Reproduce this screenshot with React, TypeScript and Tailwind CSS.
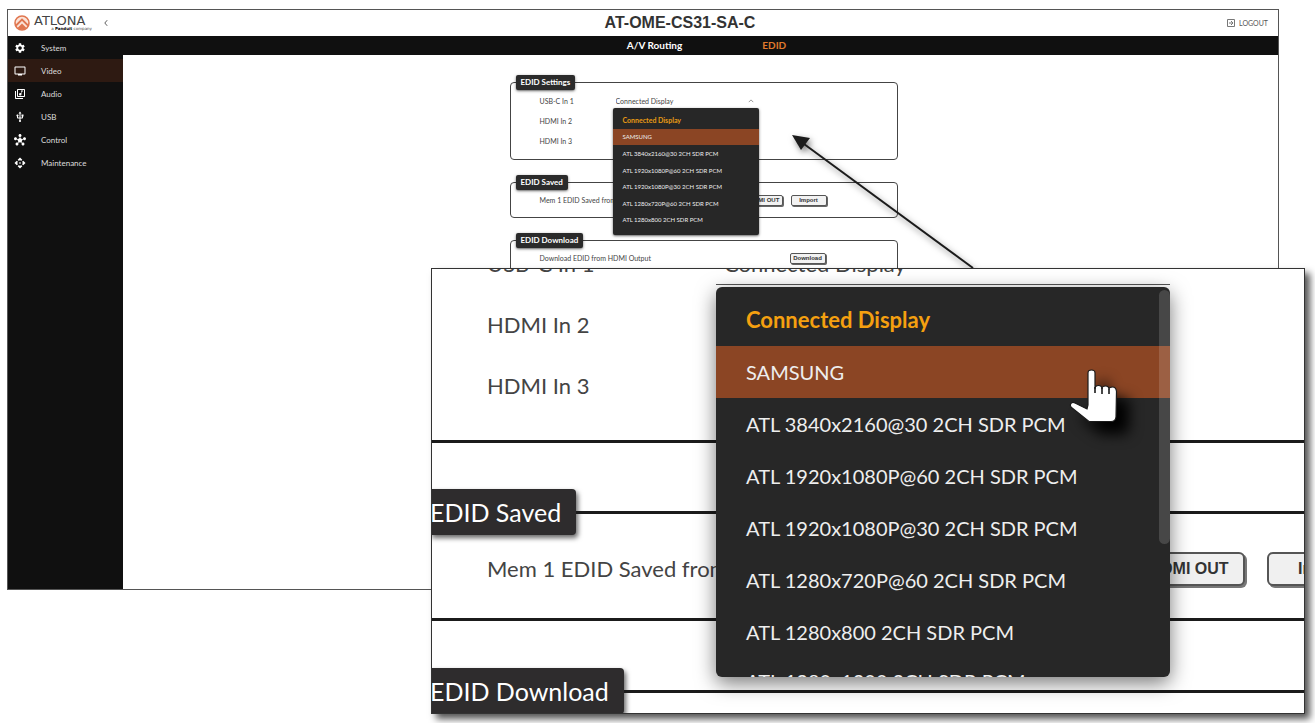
import React from 'react';
import { MdSettings, MdOutlineLibraryMusic, MdHub, MdUsb, MdOutlineTv, MdApi } from 'react-icons/md';

const edidOptions = [
  'Connected Display',
  'SAMSUNG',
  'ATL 3840x2160@30 2CH SDR PCM',
  'ATL 1920x1080P@60 2CH SDR PCM',
  'ATL 1920x1080P@30 2CH SDR PCM',
  'ATL 1280x720P@60 2CH SDR PCM',
  'ATL 1280x800 2CH SDR PCM',
];

const navItems = [
  { label: 'System', icon: MdSettings },
  { label: 'Video', icon: MdOutlineTv, active: true },
  { label: 'Audio', icon: MdOutlineLibraryMusic },
  { label: 'USB', icon: MdUsb },
  { label: 'Control', icon: MdHub },
  { label: 'Maintenance', icon: MdApi },
];

const Logo: React.FC = () => (
  <a href="#" className="flex items-center gap-1">
    <svg viewBox="0 0 16 16" className="w-4 h-4" fill="none" aria-hidden="true">
      <circle cx="8" cy="8" r="7" fill="#fbe3d8" stroke="#e0764f" strokeWidth="1.6" />
      <path d="M2 10.500 8 4.500l6 6" stroke="#e0764f" strokeWidth="1.800" />
      <path d="M8 8.500l4.500 4.500Q8 16.500 3.500 13z" fill="#e0764f" />
    </svg>
    <span className="flex w-[58px] flex-col font-['DejaVu_Sans',sans-serif] text-[#444]">
      <span className="text-[13px] leading-[11px]">ATLONA</span>
      <span className="text-right text-[4px] leading-[5px] whitespace-nowrap">
        a <b className="text-black">Panduit</b> company
      </span>
    </span>
  </a>
);

const Cursor: React.FC = () => (
  <svg
    viewBox="0 0 50 56"
    aria-hidden="true"
    className="absolute left-[353px] top-[82px] w-[50px] h-[56px] drop-shadow-[12px_12px_7px_#000]"
  >
    <path
      d="M19 38V6q0-3 3.500-3T26 6v16q0-3.500 3.500-3.500T33 22q0-3 3.500-3t3.500 3.500q0-2.500 3.500-2.500t4 4.500L47 50q-.500 4.500-5 4.500H20L2.500 40.500q-2-2-.500-4t4-.500L18 42z"
      fill="#fff"
      stroke="#1b1b1b"
      strokeWidth="1.200"
    />
    <path d="M26 20v6M33 21v6M40 22v5" stroke="#1b1b1b" strokeWidth="1.600" />
  </svg>
);

const Legend: React.FC<{ children: React.ReactNode }> = ({ children }) => (
  <legend className="ml-1 h-[15px] px-[5px] rounded-xs bg-[#2b2b2b] text-white text-[8px] leading-[14px] font-bold shadow-sm shadow-black/50">
    {children}
  </legend>
);

const SmallButton: React.FC<{ children: React.ReactNode }> = ({ children }) => (
  <button
    type="button"
    className="w-9 h-[11px] rounded-xs border border-[#555] bg-[#f2f2f2] font-['Liberation_Sans',sans-serif] text-[6px] leading-[9px] font-bold text-[#333] shadow-[1px_1px_0_#666]"
  >
    {children}
  </button>
);

const EdidPage: React.FC = () => (
  <form className="w-[388px] mx-auto pt-5 text-[7px] text-[#444]">
    <fieldset className="h-[85px] px-[1px] rounded-sm border border-[#444]">
      <Legend>EDID Settings</Legend>
      <div className="relative pt-px pl-7">
        <div className="flex h-5 items-center">
          <label htmlFor="usbc" className="w-[76px]">USB-C In 1</label>
          <select id="usbc" className="w-[140px] appearance-none bg-transparent outline-none">
            <option>Connected Display</option>
          </select>
          <svg viewBox="0 0 8 5" className="-ml-2 w-1.5 h-1" fill="none" stroke="#777"><path d="M1 4l3-3 3 3" /></svg>
        </div>
        <p className="h-5 leading-5">HDMI In 2</p>
        <p className="h-5 leading-5">HDMI In 3</p>
        <ul
          role="listbox"
          aria-label="USB-C In 1 EDID"
          className="absolute left-[101px] top-[18px] z-10 flex w-[146px] h-[127px] flex-col rounded-xs bg-[#272727] pt-1 pb-[7px] text-[6px] text-[#eee] shadow-sm shadow-black/50"
        >
          {edidOptions.map((option, i) => (
            <li
              key={option}
              role="option"
              aria-selected={i === 0}
              className={`flex flex-1 items-center px-2.5 whitespace-nowrap ${i === 0 ? 'text-[7px] font-bold text-[#e89b14]' : ''} ${i === 1 ? 'bg-[#8b4524]' : ''}`}
            >
              {option}
            </li>
          ))}
        </ul>
      </div>
    </fieldset>
    <fieldset className="mt-[15px] h-[43px] px-[1px] rounded-sm border border-[#444]">
      <Legend>EDID Saved</Legend>
      <div className="flex h-5 items-center pl-7 pr-[69px]">
        <span className="flex-1">Mem 1 EDID Saved from</span>
        <div className="flex gap-2">
          <SmallButton>HDMI OUT</SmallButton>
          <SmallButton>Import</SmallButton>
        </div>
      </div>
    </fieldset>
    <fieldset className="mt-[15px] h-[43px] px-[1px] rounded-sm border border-[#444]">
      <Legend>EDID Download</Legend>
      <div className="flex h-5 items-center justify-between pl-7 pr-[70px]">
        <span>Download EDID from HDMI Output</span>
        <SmallButton>Download</SmallButton>
      </div>
    </fieldset>
  </form>
);

const DeviceWindow: React.FC = () => (
  <div className="mr-9 border border-[#555] bg-white">
    <header className="grid grid-cols-3 h-[26px] items-center pl-1.5 pr-2.5">
      <div className="flex items-center gap-3">
        <Logo />
        <button aria-label="Collapse menu">
          <svg viewBox="0 0 5 8" className="w-1 h-2" fill="none" stroke="#333"><path d="M4 .5 1 4l3 3.500" /></svg>
        </button>
      </div>
      <h1 className="text-center pl-[78px] whitespace-nowrap font-['Liberation_Sans',sans-serif] text-base leading-4 font-bold text-[#333]">
        AT-OME-CS31-SA-C
      </h1>
      <a href="#" className="flex items-center justify-end gap-1 text-[7px] text-[#555]">
        <svg viewBox="0 0 8 8" className="w-2 h-2" fill="none" stroke="#777"><path d="M.5.5h7v7h-7zM2 4h4M4 2l2 2-2 2" /></svg>
        LOGOUT
      </a>
    </header>
    <div className="flex bg-[#101010]">
      <nav className="w-[115px] text-[8px] text-[#ddd]">
        {navItems.map(({ label, icon: Icon, active }) => (
          <a
            key={label}
            href="#"
            className={`flex h-[23px] items-center gap-[15px] pl-1.5 ${active ? 'bg-[#2e1a12]' : ''}`}
          >
            <Icon className="w-3 h-3 text-white" />
            <span>{label}</span>
          </a>
        ))}
      </nav>
      <div className="flex-1 min-w-0">
        <div className="flex h-[19px] items-center justify-center gap-20 pl-3 text-[10px] font-bold text-white">
          <a href="#">A/V Routing</a>
          <a href="#" className="text-[#e07a2c]">EDID</a>
        </div>
        <main className="min-h-[534px] bg-white pl-[6px]">
          <EdidPage />
        </main>
      </div>
    </div>
  </div>
);

const ZoomLegend: React.FC<{ children: React.ReactNode }> = ({ children }) => (
  <h2 className="h-[46px] -ml-0.5 pr-[15px] rounded-r-sm bg-[#2e2c2d] text-white text-[25px] leading-[46px] shadow-[2px_3px_5px_#0009]">
    {children}
  </h2>
);

const ZoomButton: React.FC<{ children: React.ReactNode }> = ({ children }) => (
  <button className="h-[34px] w-[112px] shrink-0 rounded-md border-2 border-[#555] bg-[#f0f0f0] font-['Liberation_Sans',sans-serif] text-base font-bold text-[#333] shadow-[2px_2px_0_#777]">
    {children}
  </button>
);

const ZoomInset: React.FC = () => (
  <section
    aria-label="EDID Settings detail"
    className="absolute left-[431px] right-[10px] top-[268px] bottom-[9px] overflow-hidden border border-[#333] bg-white text-[22px] text-[#444] shadow-[5px_5px_7px_#000a]"
  >
    <div className="-mt-[36px] h-[210px] border-b-3 border-[#1b1b1b]">
      <div className="flex h-[61px] items-center pl-[55px]">
        <span className="w-[237px]">USB-C In 1</span>
        <span>Connected Display</span>
      </div>
      <p className="h-[61px] pl-[55px] leading-[61px]">HDMI In 2</p>
      <p className="h-[61px] pl-[55px] leading-[61px]">HDMI In 3</p>
    </div>
    <div className="mt-[46px] flex items-center">
      <ZoomLegend>EDID Saved</ZoomLegend>
      <div className="h-[3px] flex-1 bg-[#1b1b1b]" />
    </div>
    <div className="flex h-[86px] items-center border-b-3 border-[#1b1b1b] pl-[55px] pb-4">
      <span className="w-[646px] shrink-0">Mem 1 EDID Saved from</span>
      <div className="flex gap-[22px]">
        <ZoomButton>HDMI OUT</ZoomButton>
        <ZoomButton>Import</ZoomButton>
      </div>
    </div>
    <div className="mt-[47px] flex items-center">
      <ZoomLegend>EDID Download</ZoomLegend>
      <div className="h-[3px] flex-1 bg-[#1b1b1b]" />
    </div>
    <div className="absolute left-[284px] top-[15px] w-[454px] border-t border-[#555] pt-[2px]">
      <ul
        role="listbox"
        aria-label="EDID source"
        className="h-[390px] overflow-hidden rounded-md bg-[#272727] pt-[7px] text-xl text-[#eee] shadow-[0_6px_20px_#0008]"
      >
        {edidOptions.map((option, i) => (
          <li
            key={option}
            role="option"
            aria-selected={i === 0}
            className={`h-[52px] pl-[30px] leading-[52px] ${i === 0 ? 'text-[22px] font-bold text-[#f5a010]' : ''} ${i === 1 ? 'bg-[#8b4524]' : ''}`}
          >
            {option}
          </li>
        ))}
        {/* next option, only its top edge scrolled into view */}
        <li role="option" aria-selected={false} className="pl-[30px] leading-[46px]">
          ATL 1280x1200 2CH SDR PCM
        </li>
      </ul>
      <div className="absolute right-0 top-[5px] h-[254px] w-[11px] rounded-md bg-white/15" />
      <Cursor />
    </div>
  </section>
);

const App: React.FC = () => (
  <div className="relative min-h-screen overflow-hidden bg-white pl-[7px] pt-[9px] pb-[9px] font-[Lato,sans-serif]">
    <DeviceWindow />
    <svg viewBox="0 0 190 140" aria-hidden="true" className="absolute left-[790px] top-[132px] w-[190px] h-[140px] drop-shadow-[2px_3px_3px_#0008]">
      <path d="M14 12 183 136" stroke="#1b1b1b" strokeWidth="2" />
      <path d="M2 3l18 3-9 12z" fill="#1b1b1b" />
    </svg>
    <ZoomInset />
  </div>
);

export default App;
